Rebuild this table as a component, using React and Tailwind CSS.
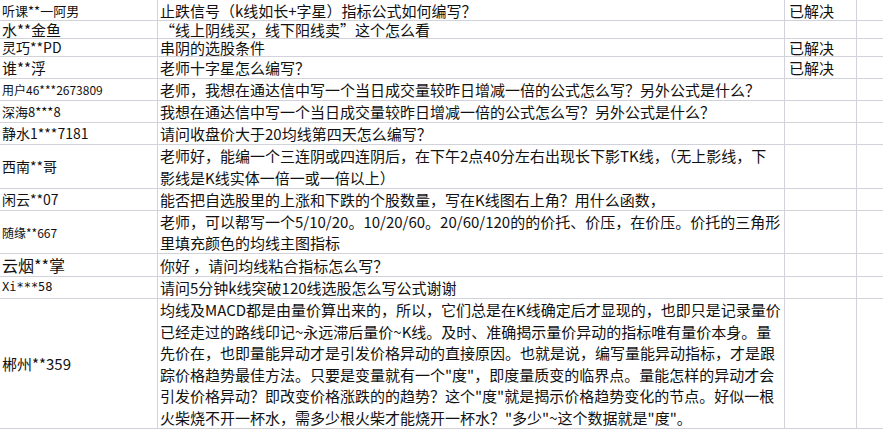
const rows = [
  { name: '听课**一阿男', nameCls: 'text-[13px]', h: 'h-[21px]', lines: ['止跌信号（k线如长+字星）指标公式如何编写？'], status: '已解决' },
  { name: '水**金鱼', nameCls: 'text-[15px]', h: 'h-[18px]', lines: ['“线上阴线买，线下阳线卖”这个怎么看'] },
  { name: '灵巧**PD', nameCls: 'text-[14px]', h: 'h-[18px]', lines: ['串阴的选股条件'], status: '已解决' },
  { name: '谁**浮', nameCls: 'text-[15px]', h: 'h-[22px]', lines: ['老师十字星怎么编写？'], status: '已解决' },
  { name: '用户46***2673809', nameCls: 'text-[12px]', h: 'h-[22px]', lines: ['老师，我想在通达信中写一个当日成交量较昨日增减一倍的公式怎么写？另外公式是什么？'] },
  { name: '深海8***8', nameCls: 'text-[13px]', h: 'h-[22px]', lines: ['我想在通达信中写一个当日成交量较昨日增减一倍的公式怎么写？另外公式是什么？'] },
  { name: '静水1***7181', nameCls: 'text-[14px]', h: 'h-[22px]', lines: ['请问收盘价大于20均线第四天怎么编写？'] },
  {
    name: '西南**哥', nameCls: 'text-[14px]', h: 'h-[44px]',
    lines: ['老师好，能编一个三连阴或四连阴后，在下午2点40分左右出现长下影TK线，（无上影线，下', '影线是K线实体一倍一或一倍以上）'],
  },
  { name: '闲云**07', nameCls: 'text-[14px]', h: 'h-[22px]', lines: ['能否把自选股里的上涨和下跌的个股数量，写在K线图右上角？用什么函数，'] },
  {
    name: '随缘**667', nameCls: 'text-[12px]', h: 'h-[43px]',
    lines: ['老师，可以帮写一个5/10/20。10/20/60。20/60/120的的价托、价压，在价压。价托的三角形', '里填充颜色的均线主图指标'],
  },
  { name: '云烟**掌', nameCls: 'text-[16px]', h: 'h-[23px]', lines: ['你好 ，请问均线粘合指标怎么写？'] },
  { name: 'Xi***58', nameCls: "text-[12px] font-['DejaVu_Sans_Mono',monospace]", h: 'h-[22px]', lines: ['请问5分钟k线突破120线选股怎么写公式谢谢'] },
  {
    name: '郴州**359', nameCls: 'text-[15px]', h: 'h-[130px]',
    lines: [
      '均线及MACD都是由量价算出来的，所以，它们总是在K线确定后才显现的，也即只是记录量价',
      '已经走过的路线印记~永远滞后量价~K线。及时、准确揭示量价异动的指标唯有量价本身。量',
      '先价在，也即量能异动才是引发价格异动的直接原因。也就是说，编写量能异动指标，才是跟',
      '踪价格趋势最佳方法。只要是变量就有一个"度"，即度量质变的临界点。量能怎样的异动才会',
      '引发价格异动？即改变价格涨跌的的趋势？这个"度"就是揭示价格趋势变化的节点。好似一根',
      '火柴烧不开一杯水，需多少根火柴才能烧开一杯水？"多少"~这个数据就是"度"。',
    ],
  },
]

export default function App() {
  return (
    <div className="w-[883px] h-[432px] bg-white overflow-hidden text-[#111] font-['Noto_Sans_CJK_SC',sans-serif]">
      <div className="grid grid-cols-[158px_627px_72px_1fr]">
        {rows.map((r, i) => (
          <div key={i} className="contents">
            <div className={`${r.h} flex items-center pl-[2px] border-r border-b border-[#d2d3da] whitespace-nowrap leading-[17px] ${r.nameCls}`}>
              {r.name}
            </div>
            <div className={`${r.h} flex flex-col justify-center pl-[2px] border-r border-b border-[#d2d3da] text-[15px] whitespace-nowrap ${r.lines.length > 1 ? 'leading-[21.5px]' : 'leading-[17px]'}`}>
              {r.lines.map((l, j) => <div key={j}>{l}</div>)}
            </div>
            <div className={`${r.h} flex items-center pl-[4px] border-r border-b border-[#d2d3da] text-[15px] leading-[17px] whitespace-nowrap`}>
              {r.status}
            </div>
            <div className={`${r.h} border-b border-[#d2d3da]`} />
          </div>
        ))}
      </div>
    </div>
  )
}
